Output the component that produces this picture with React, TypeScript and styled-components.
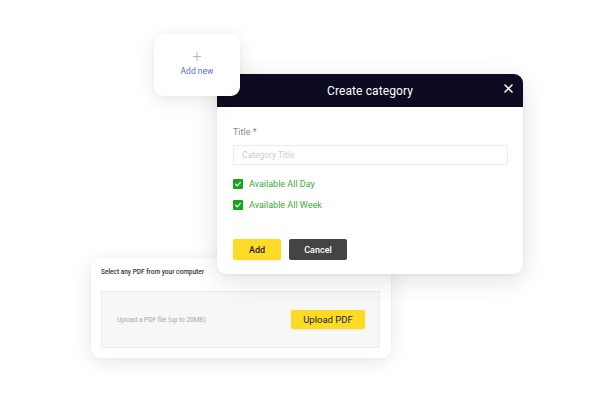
import styled, {createGlobalStyle} from 'styled-components'

const GlobalStyle = createGlobalStyle`
  html, body {
    margin: 0;
    padding: 0;
    background: #fff;
    font-family: Roboto, 'Liberation Sans', sans-serif;
  }
  * { box-sizing: border-box; }
`

const App = () => {
  return (
    <>
      <GlobalStyle />
      <Canvas>
        <UploadCard>
          <div className={'uploadTitle'}>Select any PDF from your computer</div>
          <DropZone>
            <span>Upload a PDF file (up to 20MB)</span>
            <YellowButton $width={74} $height={19} $weight={400} $size={9.5}>Upload PDF</YellowButton>
          </DropZone>
        </UploadCard>

        <Modal>
          <ModalHeader>
            <span>Create category</span>
            <CloseIcon viewBox="0 0 10 10">
              <path d="M1.8 1.8 L8.2 8.2 M8.2 1.8 L1.8 8.2" stroke="#fff" strokeWidth="1.4" strokeLinecap="round" />
            </CloseIcon>
          </ModalHeader>
          <ModalBody>
            <FieldLabel>Title *</FieldLabel>
            <TextInput placeholder="Category Title" />
            <CheckRow $top={14}>
              <CheckBox />
              <span>Available All Day</span>
            </CheckRow>
            <CheckRow $top={11}>
              <CheckBox />
              <span>Available All Week</span>
            </CheckRow>
            <ButtonRow>
              <YellowButton $width={48} $height={21} $weight={500} $size={9}>Add</YellowButton>
              <DarkButton>Cancel</DarkButton>
            </ButtonRow>
          </ModalBody>
        </Modal>

        <AddNewCard>
          <div className={'plus'}>+</div>
          <div className={'label'}>Add new</div>
        </AddNewCard>
      </Canvas>
    </>
  )
}

const CheckBox = () => (
  <Box>
    <svg width="10" height="10" viewBox="0 0 10 10">
      <path d="M2.6 5.2 L4.3 6.8 L7.4 3.4" fill="none" stroke="#fff" strokeWidth="1.2" strokeLinecap="round" strokeLinejoin="round" />
    </svg>
  </Box>
)

export default App

// Canvas with floating windows
const Canvas = styled.div`
  position: relative;
  width: 612px;
  height: 394px;
  overflow: hidden;
  background: #fff;
`

const Card = styled.div`
  position: absolute;
  background: #fff;
  border-radius: 9px;
  box-shadow: 0 4px 22px rgba(0, 0, 0, 0.09), 0 1px 4px rgba(0, 0, 0, 0.04);
`

const AddNewCard = styled(Card)`
  left: 154px;
  top: 34px;
  width: 86px;
  height: 62px;
  display: flex;
  flex-direction: column;
  align-items: center;
  padding-top: 15px;
  z-index: 3;

  & .plus {
    font-size: 16px;
    line-height: 15px;
    font-weight: 300;
    color: #b8b8bc;
  }
  & .label {
    margin-top: 2px;
    font-size: 8.5px;
    color: #5b6bd6;
  }
`

const Modal = styled(Card)`
  left: 217px;
  top: 74px;
  width: 306px;
  height: 200px;
  overflow: hidden;
  z-index: 2;
  box-shadow: 0 6px 26px rgba(0, 0, 0, 0.12), 0 1px 4px rgba(0, 0, 0, 0.05);
`

const ModalHeader = styled.div`
  position: relative;
  height: 33px;
  background: #0c0b21;
  color: #fff;
  display: flex;
  align-items: center;
  justify-content: center;
  font-size: 12px;
  letter-spacing: 0.1px;
`

const CloseIcon = styled.svg`
  position: absolute;
  right: 9px;
  top: 9px;
  width: 11px;
  height: 11px;
`

const ModalBody = styled.div`
  display: flex;
  flex-direction: column;
  padding: 20px 15px 0 16px;
`

const FieldLabel = styled.div`
  font-size: 9px;
  line-height: 11px;
  color: #8a8a8a;
`

const TextInput = styled.input`
  margin-top: 7px;
  height: 20px;
  width: 100%;
  border: 1px solid #ececec;
  border-radius: 1px;
  padding: 0 8px;
  font-family: inherit;
  font-size: 8.5px;
  outline: none;
  &::placeholder {
    color: #cdcdcd;
  }
`

const CheckRow = styled.div<{$top: number}>`
  margin-top: ${p => p.$top}px;
  display: flex;
  align-items: center;
  gap: 6px;
  font-size: 9px;
  line-height: 10px;
  color: #3aac3a;
`

const Box = styled.div`
  width: 10px;
  height: 10px;
  background: #14a814;
  border-radius: 1px;
  display: flex;
`

const ButtonRow = styled.div`
  margin-top: 29px;
  display: flex;
  gap: 8px;
`

const YellowButton = styled.div<{$width: number; $height: number; $weight: number; $size: number}>`
  width: ${p => p.$width}px;
  height: ${p => p.$height}px;
  background: #fddb25;
  border-radius: 2px;
  display: flex;
  align-items: center;
  justify-content: center;
  font-size: ${p => p.$size}px;
  font-weight: ${p => p.$weight};
  color: #1c1c1c;
  box-shadow: 0 1px 2px rgba(0, 0, 0, 0.08);
`

const DarkButton = styled.div`
  width: 58px;
  height: 21px;
  background: #444444;
  border-radius: 2px;
  display: flex;
  align-items: center;
  justify-content: center;
  font-size: 9px;
  font-weight: 500;
  color: #fff;
`

const UploadCard = styled(Card)`
  left: 91px;
  top: 258px;
  width: 300px;
  height: 100px;
  padding: 10px 11px 10px 10px;
  z-index: 1;

  & .uploadTitle {
    font-size: 6.5px;
    line-height: 8px;
    color: #333;
    font-weight: 500;
  }
`

const DropZone = styled.div`
  margin-top: 15px;
  height: 57px;
  background: #f7f7f7;
  border: 1px solid #ececec;
  display: flex;
  align-items: center;
  justify-content: space-between;
  padding: 0 14px 0 15px;

  & span {
    font-size: 6.5px;
    color: #a8a8a8;
  }
`
